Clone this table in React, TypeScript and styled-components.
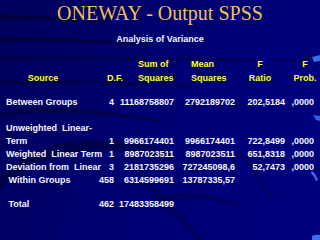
import styled, { createGlobalStyle } from "styled-components";

const GlobalStyle = createGlobalStyle`
  html, body {
    margin: 0;
    padding: 0;
    background: #000072;
  }
`;

type Row = {
    source: string;
    df?: string;
    ss?: string;
    ms?: string;
    f?: string;
    p?: string;
    gap?: number;
};

const rows: Row[] = [
    { source: "Between Groups", df: "4", ss: "11168758807", ms: "2792189702", f: "202,5184", p: ",0000", gap: 11 },
    { source: "Unweighted  Linear-", gap: 13 },
    { source: "Term", df: "1", ss: "9966174401", ms: "9966174401", f: "722,8499", p: ",0000" },
    { source: "Weighted  Linear Term", df: "1", ss: "8987023511", ms: "8987023511", f: "651,8318", p: ",0000" },
    { source: "Deviation from  Linear", df: "3", ss: "2181735296", ms: "727245098,6", f: "52,7473", p: ",0000" },
    { source: " Within Groups", df: "458", ss: "6314599691", ms: "13787335,57" },
    { source: " Total", df: "462", ss: "17483358499", gap: 11 },
];

export default function App() {
    return (
        <Slide>
            <GlobalStyle />
            <Backdrop viewBox="0 0 320 240" preserveAspectRatio="none">
                <defs>
                    <linearGradient id="bg" x1="0" y1="0" x2="1" y2="0.3">
                        <stop offset="0" stopColor="#00005c" />
                        <stop offset="0.5" stopColor="#000070" />
                        <stop offset="1" stopColor="#00007c" />
                    </linearGradient>
                </defs>
                <rect width="320" height="240" fill="url(#bg)" />
                <path d="M0 14 Q60 16 110 22 L110 24 Q60 20 0 20 Z" fill="#000030" opacity="0.6" />
                <path d="M0 36 Q80 38 150 44 L150 46 Q80 42 0 42 Z" fill="#000030" opacity="0.6" />
                <path d="M0 56 Q120 56 320 60 L320 62 Q120 60 0 60 Z" fill="#000030" opacity="0.4" />
                <path d="M0 80 Q80 78 200 86 L200 88 Q80 82 0 84 Z" fill="#000030" opacity="0.45" />
                <path d="M0 112 Q60 100 160 120 L160 123 Q60 106 0 117 Z" fill="#000030" opacity="0.5" />
                <path d="M0 175 Q60 120 170 150 L175 160 Q60 130 0 190 Z" fill="#000028" opacity="0.45" />
                <path d="M150 200 Q200 185 240 205 L238 208 Q200 192 155 205 Z" fill="#000030" opacity="0.35" />
                <path d="M140 170 L205 240 L195 240 L135 175 Z" fill="#000040" opacity="0.35" />
                <path d="M240 150 Q260 170 275 200 L270 202 Q255 172 236 152 Z" fill="#000040" opacity="0.3" />
                <path d="M312 57 L320 55 L320 61 L314 62 Z" fill="#3a6cf0" />
                <path d="M313 115 L320 116 L320 121 L316 120 Z" fill="#2f5ee8" />
                <path d="M312 171 Q316 174 318 180 L316 181 Q314 176 311 173 Z" fill="#3a6cf0" />
                <path d="M312 236 Q316 234 320 235 L320 240 L312 240 Z" fill="#3a6cf0" />
            </Backdrop>
            <Title>ONEWAY - Output SPSS</Title>
            <Subtitle>Analysis of Variance</Subtitle>
            <Table>
                <HeadCell $pr={15} $align="center">
                    <span>&nbsp;</span>
                    <span>Source</span>
                </HeadCell>
                <HeadCell $pl={12}>
                    <span>&nbsp;</span>
                    <span>D.F.</span>
                </HeadCell>
                <HeadCell $pl={24}>
                    <span>Sum of</span>
                    <span>Squares</span>
                </HeadCell>
                <HeadCell $pl={17}>
                    <span>Mean</span>
                    <span>Squares</span>
                </HeadCell>
                <HeadCell $align="center">
                    <span>F</span>
                    <span>Ratio</span>
                </HeadCell>
                <HeadCell $align="center" $pl={5}>
                    <span>F</span>
                    <span>Prob.</span>
                </HeadCell>
                {rows.map((r, i) => (
                    <DataRow key={i} $gap={r.gap ?? 0}>
                        <SourceCell>{r.source}</SourceCell>
                        <NumCell>{r.df}</NumCell>
                        <NumCell>{r.ss}</NumCell>
                        <NumCell>{r.ms}</NumCell>
                        <NumCell>{r.f}</NumCell>
                        <NumCell $pr={6}>{r.p}</NumCell>
                    </DataRow>
                ))}
            </Table>
        </Slide>
    );
}

const Slide = styled.div`
  position: relative;
  width: 320px;
  height: 240px;
  overflow: hidden;
  display: flex;
  flex-direction: column;
  align-items: stretch;
  font-family: "Liberation Sans", Arial, sans-serif;
  color: #ffffff;
`;

const Backdrop = styled.svg`
  position: absolute;
  inset: 0;
  width: 320px;
  height: 240px;
  z-index: 0;
`;

const Title = styled.h1`
  position: relative;
  z-index: 1;
  margin: 2px 0 0;
  font-family: "Liberation Serif", "Times New Roman", serif;
  font-weight: normal;
  font-size: 20px;
  line-height: 22px;
  text-align: center;
  color: #f0c050;
`;

const Subtitle = styled.div`
  position: relative;
  z-index: 1;
  margin-top: 9px;
  font-size: 9px;
  font-weight: bold;
  line-height: 12px;
  text-align: center;
  color: #f4f4ff;
`;

const Table = styled.div`
  position: relative;
  z-index: 1;
  margin-top: 12px;
  padding-left: 6px;
  display: grid;
  grid-template-columns: 89px 19px 60px 61px 50px 35px;
  font-size: 9px;
  font-weight: bold;
`;

const HeadCell = styled.div<{ $align?: "left" | "center"; $pl?: number; $pr?: number }>`
  display: flex;
  flex-direction: column;
  align-items: ${(p) => (p.$align === "center" ? "center" : "flex-start")};
  padding-left: ${(p) => p.$pl ?? 0}px;
  padding-right: ${(p) => p.$pr ?? 0}px;
  color: #ffff1a;
  line-height: 14px;
  white-space: nowrap;
`;

const DataRow = styled.div<{ $gap: number }>`
  grid-column: 1 / -1;
  display: grid;
  grid-template-columns: subgrid;
  margin-top: ${(p) => p.$gap}px;
  line-height: 13px;
  color: #f4f4ff;
`;

const SourceCell = styled.div`
  white-space: pre;
`;

const NumCell = styled.div<{ $pr?: number }>`
  text-align: right;
  white-space: nowrap;
  padding-right: ${(p) => p.$pr ?? 0}px;
`;
